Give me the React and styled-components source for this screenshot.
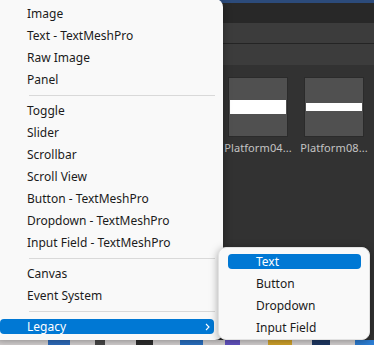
import React from 'react'
import styled, { createGlobalStyle } from 'styled-components'

const GlobalStyle = createGlobalStyle`
  html, body {
    margin: 0;
    padding: 0;
    width: 374px;
    height: 345px;
    overflow: hidden;
    background: #323232;
  }
  * {
    box-sizing: border-box;
  }
`

const Screen = styled.div`
  position: relative;
  width: 374px;
  height: 345px;
  display: flex;
  flex-direction: column;
  background: #323232;
  overflow: hidden;
  font-family: 'Noto Sans', 'Liberation Sans', sans-serif;
`

const TitleStrip = styled.div`
  height: 3px;
  background: #2c4b7b;
`

const Toolbar = styled.div`
  height: 20px;
  background: #282828;
`

const Bar = styled.div`
  height: ${({ $h }) => $h}px;
  background: #3c3c3c;
  border-bottom: ${({ $line }) => ($line ? '1px solid #242424' : 'none')};
`

const Content = styled.div`
  flex: 1;
  display: flex;
  gap: 16px;
  padding: 12px 0 0 228px;
`

const Tile = styled.div`
  width: 60px;
  display: flex;
  flex-direction: column;
  align-items: center;
`

const Thumb = styled.div`
  width: 60px;
  height: 60px;
  background: #505050;
  border: 1px solid #2b2b2b;
  display: flex;
  align-items: flex-start;
  padding: ${({ $top }) => $top}px 1px 0 1px;
`

const Plank = styled.div`
  width: 100%;
  height: ${({ $h }) => $h}px;
  background: #ffffff;
`

const TileLabel = styled.div`
  margin-top: 3px;
  font-size: 11px;
  color: #c4c4c4;
  white-space: nowrap;
  letter-spacing: 0.1px;
`

const Taskbar = styled.div`
  height: 5px;
  background: #dcd8d8;
  display: flex;
  padding-left: 48px;
`

const TaskIcon = styled.div`
  width: ${({ $w }) => $w}px;
  margin-right: ${({ $gap }) => $gap}px;
  background: ${({ $c }) => $c};
`

const Menu = styled.div`
  position: absolute;
  left: -4px;
  top: -1px;
  width: 227px;
  padding: 4px 0 2px;
  display: flex;
  flex-direction: column;
  background: #f9f9f9;
  border-radius: 0 8px 8px 0;
  box-shadow: 0 2px 8px rgba(0, 0, 0, 0.35);
`

const SubMenu = styled(Menu)`
  left: 218px;
  top: 247px;
  width: 152px;
  padding: 3px 0 0;
  border-radius: 8px;
  border: 1px solid #e2e2e2;
`

const Item = styled.div`
  height: 15px;
  margin: 3px ${({ $right }) => $right}px 4px ${({ $left }) => $left}px;
  padding: 0 4px 0 ${({ $indent }) => $indent}px;
  display: flex;
  align-items: center;
  justify-content: space-between;
  border-radius: 4px;
  font-size: 12px;
  line-height: 15px;
  white-space: nowrap;
  color: ${({ $active }) => ($active ? '#ffffff' : '#1b1b1b')};
  background: ${({ $active }) => ($active ? '#0078d4' : 'transparent')};
`

const Divider = styled.div`
  height: 9px;
  padding: 0 8px 0 33px;
  display: flex;
  align-items: center;
`

const Separator = styled.div`
  flex: 1;
  height: 1px;
  background: #d9d9d9;
`

const Chevron = () => (
  <svg width="5" height="8" viewBox="0 0 5 8">
    <path d="M1 1 L4 4 L1 7" fill="none" stroke="#ffffff" strokeWidth="1.1" />
  </svg>
)

const groups = [
  ['Image', 'Text - TextMeshPro', 'Raw Image', 'Panel'],
  [
    'Toggle',
    'Slider',
    'Scrollbar',
    'Scroll View',
    'Button - TextMeshPro',
    'Dropdown - TextMeshPro',
    'Input Field - TextMeshPro',
  ],
  ['Canvas', 'Event System'],
]

const legacyItems = ['Text', 'Button', 'Dropdown', 'Input Field']

const taskIcons = [
  { w: 22, gap: 25, c: '#2f6fc2' },
  { w: 10, gap: 31, c: '#4a4a4a' },
  { w: 17, gap: 27, c: '#2e2e2e' },
  { w: 23, gap: 22, c: '#2b74c8' },
  { w: 15, gap: 28, c: '#6656c8' },
  { w: 24, gap: 20, c: '#d8a82c' },
  { w: 18, gap: 25, c: '#1f3a66' },
  { w: 19, gap: 0, c: '#2d7fd6' },
]

const App = () => (
  <>
    <GlobalStyle />
    <Screen>
      <TitleStrip />
      <Toolbar />
      <Bar $h={21} $line />
      <Bar $h={21} />
      <Content>
        <Tile>
          <Thumb $top={22}>
            <Plank $h={14} />
          </Thumb>
          <TileLabel>Platform04...</TileLabel>
        </Tile>
        <Tile>
          <Thumb $top={25}>
            <Plank $h={8} />
          </Thumb>
          <TileLabel>Platform08...</TileLabel>
        </Tile>
      </Content>
      <Taskbar>
        {taskIcons.map((t, i) => (
          <TaskIcon key={i} $w={t.w} $gap={t.gap} $c={t.c} />
        ))}
      </Taskbar>

      <Menu>
        {groups.map((group, gi) => (
          <React.Fragment key={gi}>
            {group.map((label) => (
              <Item key={label} $left={4} $right={9} $indent={27}>
                {label}
              </Item>
            ))}
            <Divider>
              <Separator />
            </Divider>
          </React.Fragment>
        ))}
        <Item $left={4} $right={9} $indent={27} $active>
          Legacy
          <Chevron />
        </Item>
      </Menu>

      <SubMenu>
        {legacyItems.map((label, i) => (
          <Item key={label} $left={9} $right={8} $indent={28} $active={i === 0}>
            {label}
          </Item>
        ))}
      </SubMenu>
    </Screen>
  </>
)

export default App
